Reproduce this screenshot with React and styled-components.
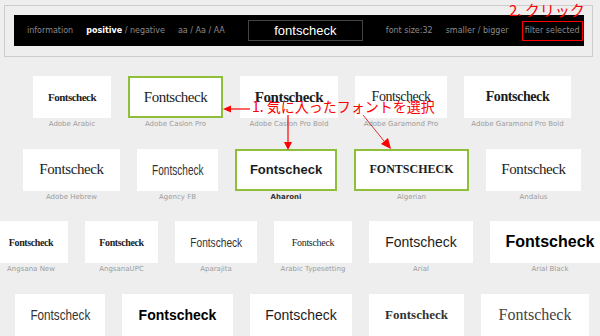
import React from 'react';
import styled, { createGlobalStyle } from 'styled-components';

const SERIF = '"Liberation Serif", "DejaVu Serif", serif';
const SANS = '"Liberation Sans", Arial, sans-serif';
const CJK = '"Noto Sans CJK JP", "Noto Sans", sans-serif';

const GlobalStyle = createGlobalStyle`
    html, body {
        margin: 0;
        padding: 0;
        overflow: hidden;
        background: #eeeeee;
    }
`

const Page = styled.div`
    position: relative;
    width: 600px;
    height: 336px;
    overflow: hidden;
    font-family: "DejaVu Sans", Verdana, sans-serif;
`

const Frame = styled.header`
    position: relative;
    margin: 5px 7px 0 4px;
    padding: 9px 8px 10px 9px;
    border: 1px solid #cccccc;
`

const Toolbar = styled.nav`
    display: flex;
    align-items: center;
    gap: 13px;
    height: 31px;
    padding-left: 13px;
    background: #000000;
`

const Item = styled.span`
    font-size: 8px;
    color: #8a8a8a;
    white-space: nowrap;
`

const Current = styled.b`
    color: #ffffff;
    font-weight: bold;
`

const SearchBox = styled.div`
    display: flex;
    align-items: center;
    justify-content: center;
    box-sizing: border-box;
    width: 115px;
    height: 21px;
    margin: 0 10px;
    border: 1px solid #444444;
    color: #ffffff;
    font-family: ${SANS};
    font-size: 13px;
`

const FilterButton = styled(Item)`
    display: flex;
    align-items: center;
    box-sizing: border-box;
    height: 20px;
    padding: 0 2px;
    border: 1px solid #ff0000;
`

const Note = styled.div`
    position: absolute;
    left: ${p => p.$x}px;
    top: ${p => p.$y}px;
    color: #ff0000;
    font-family: ${CJK};
    font-size: ${p => p.$size}px;
    line-height: ${p => p.$size}px;
    white-space: nowrap;
`

const Gallery = styled.main`
    display: flex;
    flex-direction: column;
    row-gap: 19.5px;
    margin-top: 19px;
    padding-left: 4px;
`

const Row = styled.div`
    display: flex;
    justify-content: center;
    gap: 17px;
`

const Entry = styled.div`
    display: flex;
    flex-direction: column;
    align-items: center;
    flex: none;
`

const Card = styled.div`
    display: flex;
    align-items: center;
    justify-content: center;
    box-sizing: border-box;
    height: 42px;
    background: #ffffff;
    border: ${p => p.$selected ? '2px solid #8fbf3a' : 'none'};
`

// narrow faces are not installed, so those samples are squeezed
const Sample = styled.span`
    display: inline-block;
    font-family: ${p => p.$font};
    font-size: ${p => p.$size}px;
    font-weight: ${p => p.$weight || 400};
    letter-spacing: ${p => p.$spacing || 0}px;
    color: ${p => p.$color || '#1c1c1c'};
    transform: scaleX(${p => p.$squeeze || 1});
    white-space: nowrap;
`

const Caption = styled.div`
    height: 10px;
    margin-top: 1px;
    line-height: 10px;
    font-size: 7px;
    white-space: nowrap;
    color: ${p => p.$active ? '#333333' : '#9c9c9c'};
    font-weight: ${p => p.$active ? 'bold' : 'normal'};
`

const Overlay = styled.svg`
    position: absolute;
    top: 0;
    left: 0;
    pointer-events: none;
`

const rows = [
    [
        { name: 'Adobe Arabic', w: 78, font: SERIF, size: 11, weight: 700, ls: -0.5 },
        { name: 'Adobe Caslon Pro', w: 95, font: SERIF, size: 15, ls: -0.5, selected: true },
        { name: 'Adobe Caslon Pro Bold', w: 98, font: SERIF, size: 15, weight: 700, ls: -0.4 },
        { name: 'Adobe Garamond Pro', w: 92, font: SERIF, size: 14, ls: -0.5 },
        { name: 'Adobe Garamond Pro Bold', w: 107, font: SERIF, size: 14, weight: 700, ls: -0.4 },
    ],
    [
        { name: 'Adobe Hebrew', w: 97, font: SERIF, size: 15, ls: -0.4 },
        { name: 'Agency FB', w: 81, font: SANS, size: 14, squeeze: 0.72, color: '#333' },
        { name: 'Aharoni', w: 102, font: SANS, size: 13, weight: 700, selected: true, active: true },
        { name: 'Algerian', w: 115, font: SERIF, size: 12, weight: 700, text: 'FONTSCHECK', selected: true },
        { name: 'Andalus', w: 95, font: SERIF, size: 15, ls: -0.4 },
    ],
    [
        { name: 'Angsana New', w: 74, font: SERIF, size: 10, weight: 700, ls: -0.4 },
        { name: 'AngsanaUPC', w: 73, font: SERIF, size: 10, weight: 700, ls: -0.4 },
        { name: 'Aparajita', w: 82, font: SANS, size: 13, squeeze: 0.78, color: '#333' },
        { name: 'Arabic Typesetting', w: 78, font: SERIF, size: 10, ls: -0.3 },
        { name: 'Arial', w: 104, font: SANS, size: 14 },
        { name: 'Arial Black', w: 120, font: SANS, size: 16, weight: 700, color: '#000' },
    ],
    [
        { name: 'Arial Narrow', w: 90, font: SANS, size: 15, squeeze: 0.78, color: '#333' },
        { name: 'Arial Rounded MT Bold', w: 111, font: SANS, size: 14, weight: 700, color: '#000' },
        { name: 'Arial Unicode MS', w: 102, font: SANS, size: 14 },
        { name: 'Baskerville Old Face', w: 95, font: SERIF, size: 13, weight: 700, color: '#333' },
        { name: 'Bell MT', w: 108, font: SERIF, size: 16, color: '#444' },
    ],
];

function FontCard({ font }) {
    return (
        <Entry style={{ width: font.w }}>
            <Card $selected={font.selected} style={{ width: font.w }}>
                <Sample
                    $font={font.font}
                    $size={font.size}
                    $weight={font.weight}
                    $spacing={font.ls}
                    $color={font.color}
                    $squeeze={font.squeeze}
                >
                    {font.text || 'Fontscheck'}
                </Sample>
            </Card>
            <Caption $active={font.active}>{font.name}</Caption>
        </Entry>
    )
}

export default function App() {
    return (
        <Page>
            <GlobalStyle />
            <Frame>
                <Toolbar>
                    <Item>information</Item>
                    <Item><Current>positive</Current> / negative</Item>
                    <Item>aa / Aa / AA</Item>
                    <SearchBox>fontscheck</SearchBox>
                    <Item>font size:32</Item>
                    <Item>smaller / bigger</Item>
                    <FilterButton>filter selected</FilterButton>
                </Toolbar>
                <Note $x={504} $y={-4} $size={15}>2. クリック</Note>
            </Frame>

            <Gallery>
                {rows.map((row, i) => (
                    <Row key={i}>
                        {row.map(font => <FontCard key={font.name} font={font} />)}
                    </Row>
                ))}
            </Gallery>

            <Overlay width="600" height="336" viewBox="0 0 600 336">
                <line x1="231" y1="109" x2="250" y2="109" stroke="#ff0000" strokeWidth="1.2" />
                <polygon points="223,109 231,105.5 231,112.5" fill="#ff0000" />
                <line x1="288" y1="115" x2="288" y2="143" stroke="#ff0000" strokeWidth="1.2" />
                <polygon points="288,150 284,142 292,142" fill="#ff0000" />
                <line x1="363" y1="115" x2="384" y2="141" stroke="#d40000" strokeWidth="0.8" />
                <polygon points="391,149 381,144 388,138" fill="#ff0000" />
            </Overlay>
            <Note $x={252} $y={99} $size={14}>1. 気に入ったフォントを選択</Note>
        </Page>
    )
}
